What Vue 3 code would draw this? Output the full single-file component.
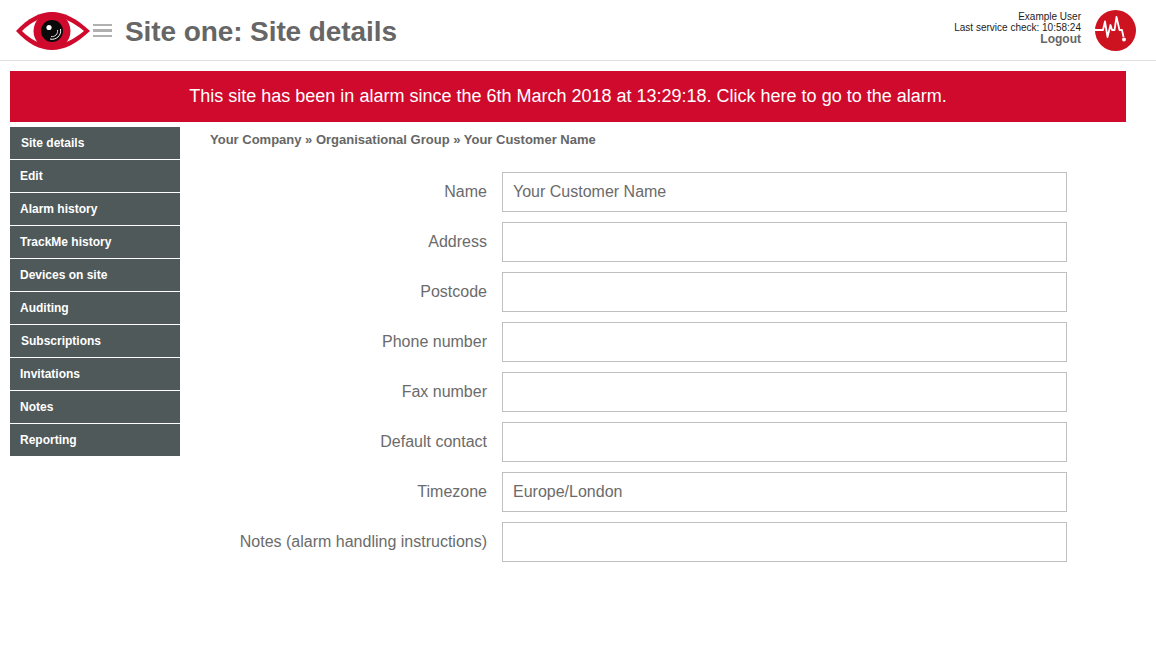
<script setup>
const menu = [
  { label: 'Site details', nudge: true },
  { label: 'Edit' },
  { label: 'Alarm history' },
  { label: 'TrackMe history' },
  { label: 'Devices on site' },
  { label: 'Auditing' },
  { label: 'Subscriptions', nudge: true },
  { label: 'Invitations' },
  { label: 'Notes' },
  { label: 'Reporting' },
]

const fields = [
  { label: 'Name', value: 'Your Customer Name' },
  { label: 'Address', value: '' },
  { label: 'Postcode', value: '' },
  { label: 'Phone number', value: '' },
  { label: 'Fax number', value: '' },
  { label: 'Default contact', value: '' },
  { label: 'Timezone', value: 'Europe/London' },
  { label: 'Notes (alarm handling instructions)', value: '' },
]
</script>

<template>
  <div class="page">
    <header class="top">
      <svg class="eye" width="74" height="38" viewBox="0 0 74 38">
        <path d="M0 19 C12 6 24 0 36 0 C48 0 60 6 74 19 C60 32 48 38 36 38 C24 38 12 32 0 19 Z" fill="#d00a2c" />
        <path d="M6 19 C14 11 24 5 36 5 C48 5 58 11 68 19 C58 27 48 33 36 33 C24 33 14 27 6 19 Z" fill="#fff" />
        <circle cx="36" cy="19" r="18.500" fill="#d00a2c" />
        <circle cx="36" cy="19" r="11" fill="#0a0a0a" />
        <circle cx="33" cy="15.500" r="2.600" fill="#fff" />
        <path d="M44.500 17 A8.500 8.500 0 0 1 34 27" fill="none" stroke="#fff" stroke-width="1" />
        <path d="M41.500 18 A5.500 5.500 0 0 1 35 24.500" fill="none" stroke="#ddd" stroke-width="1" />
      </svg>
      <div class="burger"><i></i><i></i><i></i></div>
      <h1>Site one: Site details</h1>
      <div class="user">
        <div>Example User</div>
        <div>Last service check: 10:58:24</div>
        <a class="logout">Logout</a>
      </div>
      <svg class="pulse" width="41" height="41" viewBox="0 0 41 41">
        <circle cx="20.500" cy="20.500" r="20.500" fill="#cd1220" />
        <path d="M0 20 H8 L10 11.500 L12.500 27 L15.500 15 L17 20 H19.500 L21.500 7 L24.500 20 H27 L28.500 27" fill="none" stroke="#fff" stroke-width="1.800" stroke-linejoin="round" />
        <circle cx="29" cy="29.500" r="2" fill="#fff" />
      </svg>
    </header>

    <a class="banner">This site has been in alarm since the 6th March 2018 at 13:29:18. Click here to go to the alarm.</a>

    <div class="body">
      <nav class="side">
        <a v-for="item in menu" :key="item.label" :class="{ nudge: item.nudge }">{{ item.label }}</a>
      </nav>
      <main class="content">
        <div class="crumbs">Your Company » Organisational Group » Your Customer Name</div>
        <form class="form">
          <div v-for="f in fields" :key="f.label" class="row">
            <label>{{ f.label }}</label>
            <input type="text" :value="f.value" />
          </div>
        </form>
      </main>
    </div>
  </div>
</template>

<style>
html, body {
  margin: 0;
  background: #fff;
}
</style>

<style scoped>
.page {
  width: 1156px;
  height: 650px;
  overflow: hidden;
  font-family: "Liberation Sans", Arial, sans-serif;
  color: #666;
}

.top {
  display: flex;
  align-items: center;
  height: 60px;
  padding: 0 20px 0 16px;
  border-bottom: 1px solid #e0e0e0;
}

.eye {
  flex: none;
  margin-top: 2px;
}

.burger {
  display: flex;
  flex-direction: column;
  gap: 3px;
  width: 19px;
  margin: 1px 13px 0 3px;
}

.burger i {
  display: block;
  height: 2.500px;
  background: #b0b0b0;
}

h1 {
  margin: 4px 0 0;
  font-size: 28px;
  font-weight: 700;
  letter-spacing: -0.09px;
  color: #666;
}

.user {
  margin: 0 14px 3px auto;
  text-align: right;
  font-size: 10px;
  line-height: 11px;
  color: #222;
}

.logout {
  display: block;
  font-size: 12px;
  line-height: 13px;
  font-weight: 700;
  color: #666;
}

.pulse {
  flex: none;
}

.banner {
  display: block;
  margin: 10px 30px 0 10px;
  height: 51px;
  line-height: 50px;
  text-align: center;
  font-size: 18px;
  color: #fff;
  background: #d00a2c;
}

.body {
  display: flex;
  align-items: flex-start;
  padding: 5px 0 0 10px;
}

.side {
  flex: none;
  width: 170px;
}

.side a {
  display: block;
  height: 32px;
  line-height: 32px;
  padding-left: 10px;
  margin-bottom: 1px;
  font-size: 12px;
  font-weight: 700;
  color: #fff;
  background: #50595a;
}

.side a.nudge {
  padding-left: 11px;
}

.content {
  flex: 1;
  padding-left: 30px;
}

.crumbs {
  height: 45px;
  font-size: 13px;
  font-weight: 700;
  line-height: 25px;
  color: #666;
}

.row {
  display: flex;
  align-items: center;
  height: 40px;
  margin-bottom: 10px;
}

.row label {
  width: 277px;
  margin-right: 15px;
  text-align: right;
  font-size: 16px;
  color: #6b6b6b;
}

.row input {
  width: 565px;
  height: 40px;
  box-sizing: border-box;
  padding: 0 10px;
  border: 1px solid #c0c0c0;
  border-radius: 0;
  outline: none;
  font-family: inherit;
  font-size: 16px;
  color: #6b6b6b;
  background: #fff;
}
</style>
